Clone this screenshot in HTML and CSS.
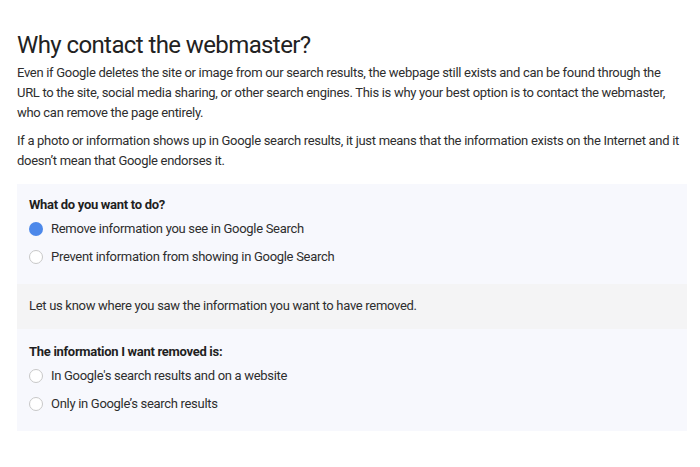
FILE: index.html
```html
<!DOCTYPE html>
<html>
<head>
<meta charset="utf-8">
<link rel="stylesheet" href="styles.css">
</head>
<body>
<main class="page">
  <h1 class="title">Why contact the webmaster?</h1>
  <p class="para">Even if Google deletes the site or image from our search results, the webpage still exists and can be found through the URL to the site, social media sharing, or other search engines. This is why your best option is to contact the webmaster, who can remove the page entirely.</p>
  <p class="para para-2">If a photo or information shows up in Google search results, it just means that the information exists on the Internet and it doesn’t mean that Google endorses it.</p>
  <section class="form">
    <div class="panel panel-first">
      <div class="question">What do you want to do?</div>
      <div class="option"><span class="radio radio-on"></span><span>Remove information you see in Google Search</span></div>
      <div class="option"><span class="radio"></span><span>Prevent information from showing in Google Search</span></div>
    </div>
    <div class="panel panel-note">Let us know where you saw the information you want to have removed.</div>
    <div class="panel panel-last">
      <div class="question">The information I want removed is:</div>
      <div class="option"><span class="radio"></span><span>In Google's search results and on a website</span></div>
      <div class="option"><span class="radio"></span><span>Only in Google’s search results</span></div>
    </div>
  </section>
</main>
</body>
</html>
```
FILE: styles.css
```css
html, body {
  margin: 0;
  padding: 0;
  background: #ffffff;
}
body {
  font-family: Roboto, "Liberation Sans", Arial, sans-serif;
  color: #2e2e2e;
  font-size: 13px;
  line-height: 20px;
  letter-spacing: -0.3px;
}
.page {
  padding: 30px 13px 0 17px;
}
.title {
  margin: 0;
  font-size: 24px;
  line-height: 30px;
  font-weight: 400;
  color: #222222;
  letter-spacing: -0.6px;
}
.para {
  margin: 3px 0 0;
  max-width: 667px;
}
.para-2 {
  margin-top: 8px;
}
.form {
  margin-top: 13px;
}
.panel {
  background: #f7f8fd;
  padding: 11px 12px 13px;
}
.panel-last {
  padding-top: 13px;
}
.panel-note {
  background: #f4f4f5;
  padding: 12px 12px 13px;
  line-height: 20px;
}
.question {
  font-weight: 700;
  color: #1f1f1f;
  line-height: 20px;
}
.option {
  display: flex;
  align-items: center;
  gap: 8px;
  height: 28px;
}
.radio {
  box-sizing: border-box;
  width: 14px;
  height: 14px;
  border-radius: 50%;
  border: 1px solid #c8c8c8;
  background: #ffffff;
  flex: none;
}
.radio-on {
  border: none;
  background: #4c88ea;
}
```
